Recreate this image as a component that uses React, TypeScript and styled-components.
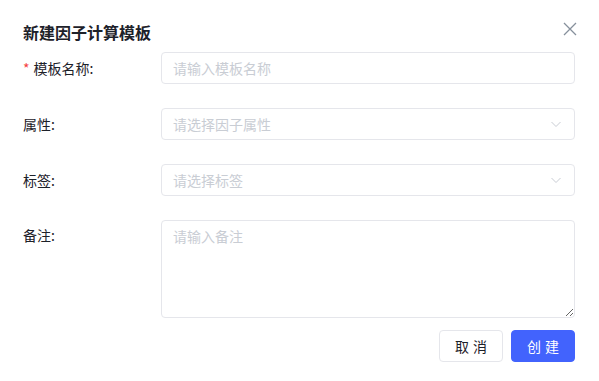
import styled, { createGlobalStyle } from 'styled-components';

const colors = {
   text: '#1d2129',
   label: '#1d2129',
   placeholder: '#c9cdd4',
   border: '#e5e6eb',
   icon: '#86909c',
   danger: '#f53f3f',
   primary: '#4263fd'
};

const GlobalStyle = createGlobalStyle`
   html, body {
      margin: 0;
      padding: 0;
      background: #ffffff;
   }
   body {
      font-family: "Noto Sans CJK SC", "Noto Sans", sans-serif;
      color: ${colors.text};
   }
   * {
      box-sizing: border-box;
   }
`;

const Modal = styled.div`
   width: 599px;
   height: 381px;
   background: #ffffff;
   padding: 20px 24px 0 23px;
   display: flex;
   flex-direction: column;
`;

const Header = styled.div`
   display: flex;
   align-items: center;
   justify-content: space-between;
   height: 24px;
   margin-bottom: 8px;
`;

const Title = styled.h2`
   margin: 0;
   font-size: 16px;
   font-weight: 700;
   line-height: 24px;
   color: ${colors.text};
`;

const CloseButton = styled.button`
   display: flex;
   align-items: center;
   justify-content: center;
   width: 16px;
   height: 16px;
   padding: 0;
   margin-right: -3px;
   margin-top: -6px;
   border: none;
   background: none;
   color: ${colors.icon};
   cursor: pointer;
`;

const Form = styled.form`
   display: flex;
   flex-direction: column;
   gap: 24px;
`;

const Row = styled.div<{ $top?: boolean }>`
   display: flex;
   align-items: ${({ $top }) => ($top ? 'flex-start' : 'center')};
`;

const Label = styled.label<{ $top?: boolean }>`
   width: 138px;
   flex-shrink: 0;
   font-size: 14px;
   line-height: 22px;
   color: ${colors.label};
   padding-top: ${({ $top }) => ($top ? '4px' : '0')};
`;

const Required = styled.span`
   color: ${colors.danger};
   margin-right: 4px;
`;

const Input = styled.input`
   flex: 1;
   height: 32px;
   border: 1px solid ${colors.border};
   border-radius: 4px;
   padding: 0 11px;
   font: inherit;
   font-size: 14px;
   color: ${colors.text};
   outline: none;

   &::placeholder {
      color: ${colors.placeholder};
   }
`;

const Select = styled.div`
   flex: 1;
   height: 32px;
   border: 1px solid ${colors.border};
   border-radius: 4px;
   padding: 0 12px 0 11px;
   display: flex;
   align-items: center;
   justify-content: space-between;
   cursor: pointer;
`;

const Placeholder = styled.span`
   font-size: 14px;
   color: ${colors.placeholder};
`;

const TextArea = styled.textarea`
   flex: 1;
   height: 98px;
   border: 1px solid ${colors.border};
   border-radius: 4px;
   padding: 4px 11px;
   font: inherit;
   font-size: 14px;
   line-height: 22px;
   color: ${colors.text};
   outline: none;

   &::placeholder {
      color: ${colors.placeholder};
   }
`;

const Footer = styled.div`
   display: flex;
   justify-content: flex-end;
   gap: 8px;
   margin-top: 12px;
`;

const Button = styled.button<{ $primary?: boolean }>`
   width: 64px;
   height: 32px;
   border-radius: 4px;
   border: 1px solid ${({ $primary }) => ($primary ? colors.primary : colors.border)};
   background: ${({ $primary }) => ($primary ? colors.primary : '#ffffff')};
   color: ${({ $primary }) => ($primary ? '#ffffff' : colors.text)};
   font: inherit;
   font-size: 14px;
   letter-spacing: 4px;
   text-indent: 4px;
   cursor: pointer;
`;

const Chevron = () => (
   <svg width="12" height="12" viewBox="0 0 12 12" fill="none">
      <path d="M1.5 4 L6 8.5 L10.5 4" stroke={colors.placeholder} strokeWidth="1" />
   </svg>
);

const App = () => {
   return (
      <Modal>
         <GlobalStyle />
         <Header>
            <Title>新建因子计算模板</Title>
            <CloseButton type="button" aria-label="关闭">
               <svg width="14" height="14" viewBox="0 0 14 14" fill="none">
                  <path d="M1 1 L13 13 M13 1 L1 13" stroke="currentColor" strokeWidth="1.3" />
               </svg>
            </CloseButton>
         </Header>
         <Form onSubmit={(e) => e.preventDefault()}>
            <Row>
               <Label>
                  <Required>*</Required>模板名称:
               </Label>
               <Input placeholder="请输入模板名称" />
            </Row>
            <Row>
               <Label>属性:</Label>
               <Select>
                  <Placeholder>请选择因子属性</Placeholder>
                  <Chevron />
               </Select>
            </Row>
            <Row>
               <Label>标签:</Label>
               <Select>
                  <Placeholder>请选择标签</Placeholder>
                  <Chevron />
               </Select>
            </Row>
            <Row $top>
               <Label $top>备注:</Label>
               <TextArea placeholder="请输入备注" />
            </Row>
         </Form>
         <Footer>
            <Button type="button">取消</Button>
            <Button type="button" $primary>
               创建
            </Button>
         </Footer>
      </Modal>
   );
};

export default App;
